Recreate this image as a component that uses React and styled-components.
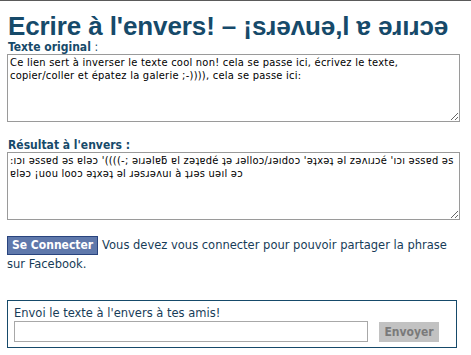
import React from "react";
import styled, { createGlobalStyle } from "styled-components";

const GlobalStyle = createGlobalStyle`
  html, body {
    margin: 0;
    padding: 0;
    background: #fff;
  }
  body {
    border-top: 1px solid #5a5a5a;
    font-family: "DejaVu Sans", Verdana, sans-serif;
    color: #173c58;
  }
`;

const Page = styled.div`
  width: 452px;
  padding: 0 0 0 7px;
`;

const Title = styled.h1`
  margin: 10px 0 0 1px;
  font-family: "Liberation Sans", "DejaVu Sans", sans-serif;
  font-size: 26px;
  letter-spacing: -0.1px;
  line-height: 30px;
  font-weight: bold;
  color: #164a6a;
  white-space: nowrap;
`;

const Label = styled.label`
  display: block;
  margin: ${({ $top }) => $top || 0}px 0 0 1px;
  font-family: "DejaVu Sans Condensed", "DejaVu Sans", sans-serif;
  font-size: 12px;
  line-height: 13px;
  font-weight: bold;
  color: #164a6a;

  span {
    font-weight: normal;
  }
`;

const TextBox = styled.textarea`
  display: block;
  box-sizing: border-box;
  width: 453px;
  height: 68px;
  margin: 0;
  padding: 1px 2px;
  border: 1px solid #9a9a9a;
  font-family: "DejaVu Sans Condensed", "DejaVu Sans", sans-serif;
  font-size: 11px;
  letter-spacing: 0.25px;
  line-height: 13px;
  color: #000;
  background: #fff;
  resize: both;
  outline: none;
  overflow: hidden;
`;

const ShareRow = styled.p`
  margin: 16px 0 0;
  font-size: 11.5px;
  line-height: 19px;
  color: #173c58;
`;

const FbButton = styled.button`
  display: inline-block;
  box-sizing: border-box;
  height: 19px;
  margin: 0 4px 0 0;
  padding: 0 4px;
  background: #5f78ab;
  border: 1px solid #29447e;
  color: #fff;
  font-family: "DejaVu Sans Condensed", "DejaVu Sans", sans-serif;
  font-size: 12px;
  font-weight: bold;
  line-height: 17px;
  vertical-align: top;
`;

const SendBox = styled.div`
  box-sizing: border-box;
  width: 450px;
  margin-top: 26px;
  padding: 5px 5px 5px 6px;
  border: 1px solid #164a6a;
`;

const SendTitle = styled.div`
  font-size: 11.5px;
  line-height: 15px;
  color: #173c58;
`;

const SendRow = styled.div`
  display: flex;
  align-items: center;
  gap: 11px;
`;

const SendInput = styled.input`
  box-sizing: border-box;
  width: 354px;
  height: 21px;
  margin: 0;
  border: 1px solid #a8a8a8;
  background: #fff;
  outline: none;
`;

const SendButton = styled.button`
  box-sizing: border-box;
  width: 60px;
  height: 20px;
  padding: 0;
  border: none;
  background: #c2c2c2;
  color: #7a7a7a;
  font-family: "DejaVu Sans Condensed", "DejaVu Sans", sans-serif;
  font-size: 12px;
  font-weight: bold;
`;

const original =
  "Ce lien sert à inverser le texte cool non! cela se passe ici, écrivez le texte, copier/coller et épatez la galerie ;-)))), cela se passe ici:";

const reversed =
  ":ıɔı ǝssɐd ǝs ɐlǝɔ '((((-; ǝıɹǝlɐƃ ɐl zǝʇɐdé ʇǝ ɹǝlloɔ/ɹǝıdoɔ 'ǝʇxǝʇ ǝl zǝʌıɹɔé 'ıɔı ǝssɐd ǝs\nɐlǝɔ ¡uou looɔ ǝʇxǝʇ ǝl ɹǝsɹǝʌuı à ʇɹǝs uǝıl ǝɔ";

export default function App() {
  return (
    <Page>
      <GlobalStyle />
      <Title>Ecrire à l'envers! – ¡sɹǝʌuǝ,l ɐ ǝɹıɹɔǝ</Title>
      <Label>
        Texte original <span>:</span>
      </Label>
      <TextBox defaultValue={original} />
      <Label $top={17}>Résultat à l'envers :</Label>
      <TextBox readOnly defaultValue={reversed} />
      <ShareRow>
        <FbButton>Se Connecter</FbButton>
        Vous devez vous connecter pour pouvoir partager la phrase sur Facebook.
      </ShareRow>
      <SendBox>
        <SendTitle>Envoi le texte à l'envers à tes amis!</SendTitle>
        <SendRow>
          <SendInput />
          <SendButton>Envoyer</SendButton>
        </SendRow>
      </SendBox>
    </Page>
  );
}
